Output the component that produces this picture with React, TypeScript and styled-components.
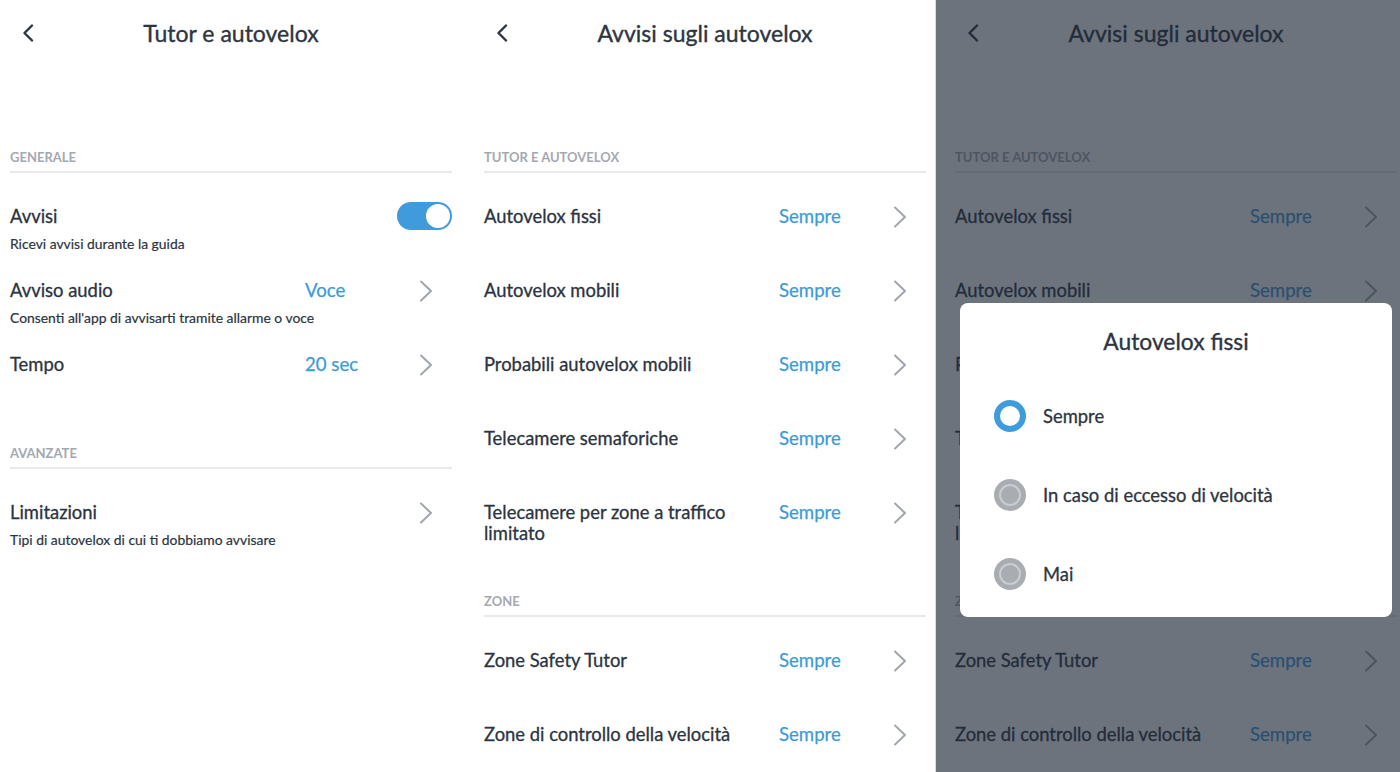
import React from "react";
import styled, { createGlobalStyle } from "styled-components";

const GlobalStyle = createGlobalStyle`
  html, body { margin: 0; padding: 0; background: #ffffff; }
  body {
    font-family: Lato, "Open Sans", "Liberation Sans", sans-serif;
    -webkit-font-smoothing: antialiased;
    color: #2d3540;
  }
  * { box-sizing: border-box; }
`;

const Page = styled.div`
  display: flex;
  width: 1400px;
  height: 772px;
  overflow: hidden;
  background: #ffffff;
`;

const Screen = styled.section<{ $gap?: number; $w?: number; $pr?: number }>`
  flex: none;
  width: ${(p) => p.$w ?? 462}px;
  margin-left: ${(p) => p.$gap ?? 0}px;
  padding: 0 ${(p) => p.$pr ?? 10}px 0 10px;
  height: 772px;
  background: #ffffff;
`;

const DimmedPane = styled.div`
  position: relative;
  flex: 1;
  height: 772px;
  overflow: hidden;
  border-left: 1px solid #d9dbde;
  padding-left: 9px;
  display: flex;
`;

const Overlay = styled.div`
  position: absolute;
  inset: 0;
  background: rgba(30, 40, 56, 0.65);
`;

const NavBar = styled.header`
  height: 66px;
  display: grid;
  grid-template-columns: 60px 1fr 60px;
  align-items: center;
`;

const BackButton = styled.div`
  padding-left: 12px;
  display: flex;
  align-items: center;
  height: 24px;
`;

const Title = styled.h1`
  margin: 0;
  text-align: center;
  font-size: 23px;
  line-height: 28px;
  font-weight: 400;
  color: #2d3540;
  white-space: nowrap;
  -webkit-text-stroke: 0.35px #2d3540;
`;

const Content = styled.div`
  padding-top: 39px;
`;

const SectionHeader = styled.div`
  margin-top: 44px;
  font-size: 13px;
  line-height: 16px;
  font-weight: 700;
  color: #a4a9af;
  text-transform: uppercase;
  padding-bottom: 6px;
  border-bottom: 2px solid #e8e9eb;
  margin-bottom: 6px;
`;

const Row = styled.div`
  height: 74px;
  padding-top: 27px;
  display: grid;
  grid-template-columns: minmax(0, 1fr) auto;
  align-items: start;
`;

const LabelBlock = styled.div`
  padding-right: 10px;
  min-width: 0;
`;

const Label = styled.div`
  font-size: 18.4px;
  line-height: 21px;
  color: #2b3440;
  -webkit-text-stroke: 0.3px #2b3440;
`;

const Sub = styled.div`
  margin-top: 9px;
  font-size: 13.9px;
  line-height: 16px;
  color: #2b3440;
  white-space: nowrap;
  -webkit-text-stroke: 0.2px #2b3440;
`;

const Trailing = styled.div`
  display: flex;
  align-items: center;
  height: 21px;
  padding-right: 19px;
`;

const Value = styled.span`
  width: 114px;
  font-size: 18.6px;
  line-height: 21px;
  color: #3d9ad9;
  -webkit-text-stroke: 0.25px #3d9ad9;
`;

const Toggle = styled.div<{ $on: boolean }>`
  margin-top: -4px;
  width: 55px;
  height: 28px;
  border-radius: 14px;
  background: ${(p) => (p.$on ? "#3f9bdb" : "#c7cacd")};
  display: flex;
  align-items: center;
  justify-content: ${(p) => (p.$on ? "flex-end" : "flex-start")};
  padding: 0 2px;
`;

const Knob = styled.span`
  width: 24px;
  height: 24px;
  border-radius: 50%;
  background: #ffffff;
`;

const Dialog = styled.div`
  position: absolute;
  left: 24px;
  top: 303px;
  width: 432px;
  height: 314px;
  background: #ffffff;
  border-radius: 8px;
  padding-top: 24px;
  display: flex;
  flex-direction: column;
`;

const DialogTitle = styled.div`
  text-align: center;
  font-size: 22.8px;
  line-height: 28px;
  color: #2d3540;
  -webkit-text-stroke: 0.35px #2d3540;
`;

const OptionList = styled.div`
  margin-top: 21px;
  display: flex;
  flex-direction: column;
`;

const Option = styled.div`
  height: 79px;
  display: flex;
  align-items: center;
  gap: 17px;
  padding-left: 34px;
  font-size: 18.4px;
  color: #2d3540;
  -webkit-text-stroke: 0.3px #2d3540;
`;

const Radio = styled.span<{ $checked: boolean }>`
  flex: none;
  width: 32px;
  height: 32px;
  border-radius: 50%;
  display: flex;
  align-items: center;
  justify-content: center;
  background: ${(p) => (p.$checked ? "#ffffff" : "#a9adb2")};
  border: ${(p) => (p.$checked ? "6px solid #3f9cdc" : "none")};
  &::after {
    content: "";
    display: ${(p) => (p.$checked ? "none" : "block")};
    width: 18px;
    height: 18px;
    border-radius: 50%;
    border: 2px solid #c9ccd0;
  }
`;

const Chevron = () => (
  <svg width="14" height="24" viewBox="0 0 14 24" fill="none">
    <path d="M2 2.5 L12 12 L2 21.5" stroke="#a1a6ac" strokeWidth="2" strokeLinecap="round" strokeLinejoin="round" />
  </svg>
);

const BackChevron = () => (
  <svg width="12" height="18" viewBox="0 0 12 18" fill="none">
    <path d="M10 1.5 L2.5 9 L10 16.5" stroke="#2d3540" strokeWidth="2.4" strokeLinecap="round" strokeLinejoin="round" />
  </svg>
);

type Item = { label: string; value?: string; sub?: string; toggle?: boolean };
type Section = { title: string; items: Item[] };

const SettingRow = ({ item }: { item: Item }) => (
  <Row>
    <LabelBlock>
      <Label>{item.label}</Label>
      {item.sub && <Sub>{item.sub}</Sub>}
    </LabelBlock>
    {item.toggle ? (
      <Toggle $on>
        <Knob />
      </Toggle>
    ) : (
      <Trailing>
        <Value>{item.value}</Value>
        <Chevron />
      </Trailing>
    )}
  </Row>
);

const SettingsScreen = ({ title, sections }: { title: string; sections: Section[] }) => (
  <>
    <NavBar>
      <BackButton>
        <BackChevron />
      </BackButton>
      <Title>{title}</Title>
      <span />
    </NavBar>
    <Content>
      {sections.map((s) => (
        <div key={s.title}>
          <SectionHeader>{s.title}</SectionHeader>
          {s.items.map((it) => (
            <SettingRow key={it.label} item={it} />
          ))}
        </div>
      ))}
    </Content>
  </>
);

const tutorSections: Section[] = [
  {
    title: "Generale",
    items: [
      { label: "Avvisi", sub: "Ricevi avvisi durante la guida", toggle: true },
      { label: "Avviso audio", value: "Voce", sub: "Consenti all'app di avvisarti tramite allarme o voce" },
      { label: "Tempo", value: "20 sec" },
    ],
  },
  {
    title: "Avanzate",
    items: [{ label: "Limitazioni", value: "", sub: "Tipi di autovelox di cui ti dobbiamo avvisare" }],
  },
];

const alertSections: Section[] = [
  {
    title: "Tutor e autovelox",
    items: [
      { label: "Autovelox fissi", value: "Sempre" },
      { label: "Autovelox mobili", value: "Sempre" },
      { label: "Probabili autovelox mobili", value: "Sempre" },
      { label: "Telecamere semaforiche", value: "Sempre" },
      { label: "Telecamere per zone a traffico limitato", value: "Sempre" },
    ],
  },
  {
    title: "Zone",
    items: [
      { label: "Zone Safety Tutor", value: "Sempre" },
      { label: "Zone di controllo della velocità", value: "Sempre" },
    ],
  },
];

const options = ["Sempre", "In caso di eccesso di velocità", "Mai"];

export default function App() {
  return (
    <>
      <GlobalStyle />
      <Page>
        <Screen>
          <SettingsScreen title="Tutor e autovelox" sections={tutorSections} />
        </Screen>
        <Screen $gap={12} $w={461} $pr={9}>
          <SettingsScreen title="Avvisi sugli autovelox" sections={alertSections} />
        </Screen>
        <DimmedPane>
          <Screen>
            <SettingsScreen title="Avvisi sugli autovelox" sections={alertSections} />
          </Screen>
          <Overlay />
          <Dialog>
            <DialogTitle>Autovelox fissi</DialogTitle>
            <OptionList>
              {options.map((o, i) => (
                <Option key={o}>
                  <Radio $checked={i === 0} />
                  {o}
                </Option>
              ))}
            </OptionList>
          </Dialog>
        </DimmedPane>
      </Page>
    </>
  );
}
